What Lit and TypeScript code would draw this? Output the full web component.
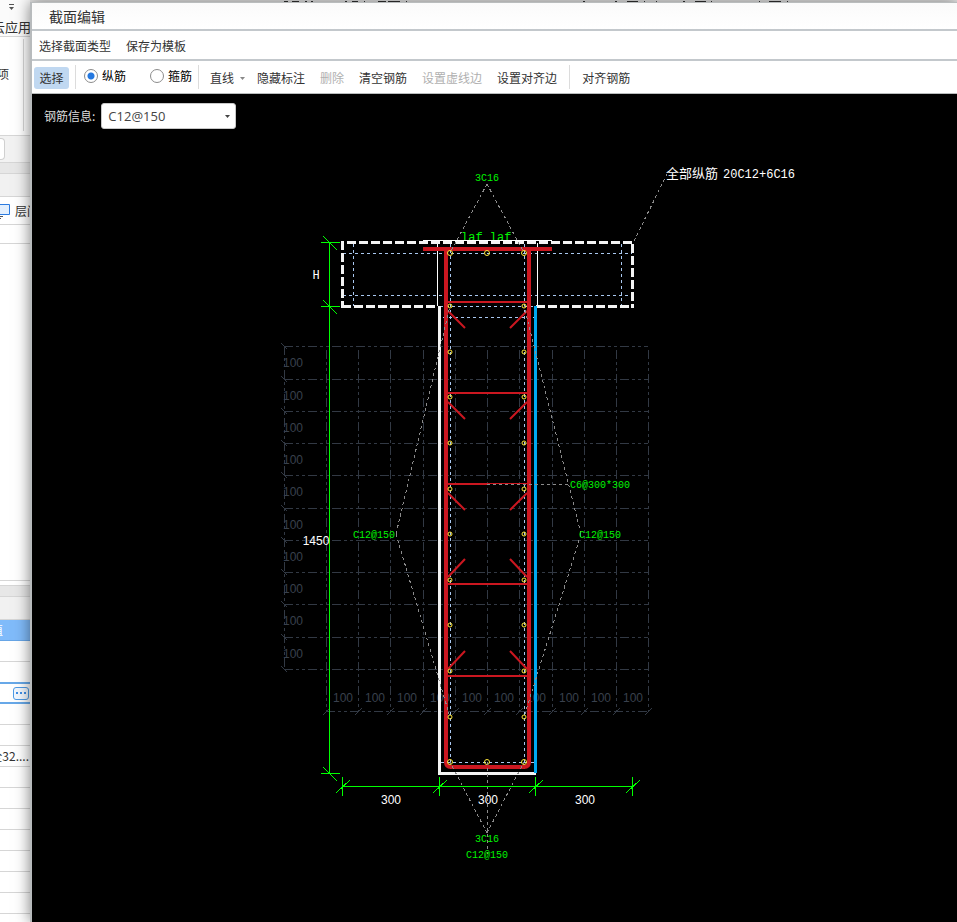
import { LitElement, html, svg, css } from "lit";
import { customElement, state } from "lit/decorators.js";

const range = (n: number) => Array.from({ length: n }, (_, i) => i);

const GRID_X = [326, 358, 390, 423, 455, 487, 519, 552, 584, 616, 648];
const GRID_Y = [346, 379, 411, 443, 475, 508, 540, 572, 604, 637, 669];
const BAR_Y = [306, 352, 397, 443, 489, 534, 580, 625, 671, 717];
const TIES = [
  { y: 302, dir: 1 },
  { y: 393, dir: 1 },
  { y: 484, dir: 1 },
  { y: 584, dir: -1 },
  { y: 676, dir: -1 },
];

/** Cross-section drawing: flange, web, rebar, ties and dimensions. */
@customElement("section-drawing")
class SectionDrawing extends LitElement {
  static styles = css`
    :host { display: grid; }
    svg { display: block; width: 100%; height: 100%; min-height: 780px; }
    path, circle { fill: none; }
    .lines { shape-rendering: crispEdges; }
    .grid { stroke: #323944; stroke-dasharray: 9 3 3 3 3 3; }
    .tick { stroke: #323944; }
    .cover { stroke: #a9c8f0; stroke-dasharray: 3 3; }
    .flange { stroke: #f4f4f4; stroke-width: 3; stroke-dasharray: 9 3; }
    .thin { stroke: #fff; }
    .edge { stroke: #f4f4f4; stroke-width: 3; }
    .aligned { stroke: #00a8f0; stroke-width: 3; }
    .stirrup { stroke: #cb1720; stroke-width: 4; shape-rendering: auto; }
    .tie { stroke: #cb1720; stroke-width: 2; }
    .fine { stroke: #cb1720; }
    .hook { stroke: #cb1720; stroke-width: 2; shape-rendering: auto; }
    .bar { stroke: #ffe83a; }
    .leader { stroke: #8b8b8b; stroke-dasharray: 3 3; }
    .dim { stroke: #00ff00; }
    text { font-family: "Liberation Sans", sans-serif; font-size: 12px; fill: #fff; }
    .mid { text-anchor: middle; }
    .dark { fill: #39414d; }
    .green { fill: #00f400; font-family: "Liberation Mono", monospace; font-size: 10px; }
    .lap { fill: #00f400; font-family: "Liberation Mono", monospace; }
    .mono { font-family: "Liberation Mono", monospace; }
    .total { font-family: "Noto Sans CJK SC", sans-serif; font-size: 13px; }
  `;

  private grid() {
    return svg`
      ${GRID_X.map((x) => svg`<path class="grid" d="M${x + 0.5} 350V711"/>
        <path class="tick" d="M${x - 3} 715l7 -7"/>`)}
      ${GRID_Y.map((y) => svg`<path class="grid" d="M284 ${y + 0.5}H648"/>
        <path class="tick" d="M281 ${y - 3}l6 6"/>`)}
      <path class="grid" d="M284.5 346V669M326 711.5H648"/>`;
  }

  private gridLabels() {
    return svg`
      ${range(10).map((i) => svg`<text class="dark" x="283" y=${GRID_Y[i] + 21}>100</text>
        <text class="dark" x=${GRID_X[i] + 7} y="702">100</text>`)}`;
  }

  private tie(t: { y: number; dir: number }) {
    const a = t.dir > 0 ? t.y + 9 : t.y - 7;
    const b = t.dir > 0 ? t.y + 26 : t.y - 25;
    return svg`<path class="tie" d="M446 ${t.y}H${t.y === 484 ? 487 : 528}"/>
      <path class="hook" d="M448 ${a}L465 ${b}M527 ${a}L510 ${b}"/>`;
  }

  render() {
    return html`<svg role="img" aria-label="截面">
      <g transform="translate(-32 -94)">
        <g class="lines">${this.grid()}</g>
        ${this.gridLabels()}
        <text class="lap" x="461" y="241">laf laf</text>
        <g class="lines">
          <path class="cover" d="M343 253.5H632M343 295.5H632M353.5 244V306M621.5 244V306M440 306.5H536M443 317.5H536M450.5 244V772M524.5 244V772M441 762.5H534"/>
          <path class="thin" d="M437.5 243V306M537.5 243V306M423 240.5H552"/>
          <path class="stirrup" d="M423 249H552M446 250V762Q446 767 451 767H524Q529 767 529 762V250"/>
          ${TIES.map((t) => this.tie(t))}
          <path class="fine" d="M487 483.5H528"/>
          <path class="flange" stroke-dashoffset="7" d="M342 242.5H634"/>
          <path class="flange" d="M342.5 241V308M632.5 244V308M342 306.5H438M536 306.5H633"/>
          <path class="edge" d="M439.5 306V773.5H536"/>
          <path class="aligned" d="M535.5 306V773"/>
        </g>
        ${BAR_Y.map((y) => svg`<circle class="bar" cx="450" cy=${y} r="2"/><circle class="bar" cx="524" cy=${y} r="2"/>`)}
        ${[253, 762].map((y) => [450, 487, 524].map((x) => svg`<circle class="bar" cx=${x} cy=${y} r="2.5"/>`))}
        <g class="lines">
          <path class="leader" d="M487 184L450 253M487 184L524 253M487.5 762V854M487 833L450 762M487 833L524 762"/>
          <path class="leader" d="M396 534L450 306M396 534L450 717M581 534L524 306M581 534L524 717M487 484.5H570M634 241L667 174"/>
          <path class="dim" d="M329.5 242V774M321 242.5H340M321 306.5H340M321 773.5H340M323 236l14 14M323 300l14 14M323 767l14 14"/>
          <path class="dim" d="M342 786.5H633"/>
          ${[342, 439, 535, 632].map((x) => svg`<path class="dim" d="M${x + 0.5} 777V796M${x - 6} 793l14 -13"/>`)}
        </g>
        <text class="total" x="666" y="178">全部纵筋</text>
        <text class="mono" x="723" y="178">20C12+6C16</text>
        <text class="mono mid" x="316" y="279">H</text>
        <text class="mid" x="316" y="545">1450</text>
        ${[391, 488, 585].map((x) => svg`<text class="mid" x=${x} y="804">300</text>`)}
        <text class="green mid" x="487" y="181">3C16</text>
        <text class="green" x="353" y="538">C12@150</text>
        <text class="green" x="579" y="538">C12@150</text>
        <text class="green" x="570" y="488">C6@300*300</text>
        <text class="green mid" x="487" y="842">3C16</text>
        <text class="green mid" x="487" y="858">C12@150</text>
      </g>
    </svg>`;
  }
}

/** Sliver of the main window that stays visible left of the dialog. */
@customElement("main-window-strip")
class MainWindowStrip extends LitElement {
  static styles = css`
    :host { display: flex; flex-direction: column; background: #fff; color: #333; font: 12px/16px "Noto Sans CJK SC", sans-serif; overflow: hidden; white-space: nowrap; }
    div { box-sizing: border-box; flex: none; display: flex; border-bottom: 1px solid #d6d6d6; }
    svg { flex: none; }
    .top { flex-direction: column; justify-content: space-between; height: 37px; padding: 3px 0 1px; background: #fbfbfb; }
    .top svg { margin-left: 7px; }
    .tab { display: flex; justify-content: flex-end; width: 31px; font-size: 13px; }
    .ribbon { height: 99px; padding: 2px 6px 4px 0; justify-content: space-between; align-items: stretch; }
    .ribbon span { width: 9px; display: flex; justify-content: flex-end; align-self: center; padding-bottom: 22px; }
    .ribbon i { border-left: 1px solid #d6d6d6; }
    .search { height: 27px; padding: 2px 0; background: #f2f2f2; }
    .search i { width: 4px; border: 1px solid #d0d0d0; border-left: 0; border-radius: 0 4px 4px 0; background: #fff; }
    .gap { height: 11px; background: #e7e7e7; }
    .head { height: 23px; background: #f1f1f1; }
    .layer { height: 28px; align-items: center; gap: 4px; }
    .plain { height: 19px; }
    .tree { height: 337px; }
    .thin { height: 5px; }
    .row { height: 21px; align-items: center; }
    .last { height: 20px; border-bottom: 0; }
    .selected { height: 21px; align-items: center; background: #80bbfa; color: #fff; border-bottom-color: #67a5e6; }
    .cut { width: 3px; display: flex; justify-content: flex-end; }
    .active { height: 22px; justify-content: flex-end; align-items: center; padding-right: 1px; border-top: 2px solid #67a8e8; border-bottom: 2px solid #67a8e8; }
    .value { width: 29px; display: flex; justify-content: flex-end; }
    button { width: 16px; height: 13px; padding: 0; border: 1px solid #4f9be5; border-radius: 3px; background: #f2f8ff; display: grid; place-items: center; }
  `;

  render() {
    return html`
      <div class="top">
        <svg width="9" height="8"><path d="M2 1.500h5" stroke="#555"/><path d="M2 4h5L4.500 7z" fill="#555"/></svg>
        <span class="tab">云应用</span>
      </div>
      <div class="ribbon"><span>项</span><i></i></div>
      <div class="search"><i></i></div>
      <div class="gap"></div>
      <div class="head"></div>
      <div class="layer">
        <svg width="11" height="16"><path d="M-2 1.500H9.500V11.500H-2z" fill="#e3effd" stroke="#2c7be0"/><path d="M-1 13.500H3M-1 15.500H1" stroke="#555"/></svg>
        <span>层间</span>
      </div>
      <div class="plain"></div>
      <div class="tree"></div>
      <div class="thin"></div>
      <div class="gap"></div>
      <div class="head"></div>
      <div class="selected"><span class="cut">值</span></div>
      <div class="row"></div>
      <div class="last"></div>
      <div class="active">
        <button aria-label="更多"><svg width="10" height="2"><path d="M0 0h2v2H0zM4 0h2v2H4zM8 0h2v2H8z" fill="#3f8ee6"/></svg></button>
      </div>
      <div class="row"></div>
      <div class="row"></div>
      <div class="row"><span class="value">全32....</span></div>
      ${range(8).map(() => html`<div class="row"></div>`)}
    `;
  }
}

@customElement("app-root")
class AppRoot extends LitElement {
  @state() private barType = "纵筋";

  static styles = css`
    :host { display: grid; grid-template-columns: 30px minmax(0, 1fr); height: 100vh; overflow: hidden; background: #e9e9e9; font: 12px/16px "Noto Sans CJK SC", sans-serif; color: #333; }
    main-window-strip { min-height: 0; }
    .side { display: flex; flex-direction: column; min-width: 0; min-height: 0; }
    .behind { flex: none; height: 2px; display: block; width: 100%; }
    .dialog { flex: 1; min-height: 0; display: flex; flex-direction: column; border-left: 2px solid #b8bbbd; border-top: 1px solid #b9bcbd; background: #fff; box-shadow: 0 0 14px rgba(0, 0, 0, 0.5); }
    .title { flex: none; box-sizing: border-box; height: 28px; margin: 0; padding: 3px 17px 0; border-bottom: 2px solid #c3c8cc; background: linear-gradient(#fafafa, #fff); font-size: 14px; line-height: 20px; font-weight: 400; }
    .menu { flex: none; box-sizing: border-box; height: 30px; display: flex; align-items: center; gap: 15px; padding: 2px 0 0 7px; border-bottom: 2px solid #c3c8cc; }
    .tools { flex: none; box-sizing: border-box; height: 33px; display: flex; align-items: center; padding: 2px 0 0 2px; border-bottom: 1px solid #b9bcbd; }
    button { font: inherit; color: #333; padding: 0; border: 0; background: none; white-space: nowrap; }
    button:disabled { color: #b0b0b0; }
    .picked { width: 35px; height: 22px; border-radius: 3px; background: #c0d8f1; }
    .tools hr { flex: none; width: 1px; height: 24px; border: 0; background: #dcdcdc; }
    .tools .after-pick { margin: 0 8px 2px 6px; }
    .tools .after-radio { margin: 0 11px 2px 6px; }
    .tools .before-last { margin: 0 12px 2px; }
    .commands { display: flex; gap: 15px; }
    .drop { display: flex; align-items: center; gap: 6px; margin-right: -3px; }
    .radios { display: flex; gap: 24px; padding-bottom: 4px; color: #000; }
    .radios label { display: flex; align-items: center; gap: 4px; white-space: nowrap; }
    input { appearance: none; width: 14px; height: 14px; margin: 0; border: 1px solid #8c8c8c; border-radius: 50%; background: #fff; }
    input:checked { background: radial-gradient(#2478e0 0 3px, #fff 4px); }
    .canvas { flex: 1; min-height: 0; display: grid; background: #000; }
    section-drawing { grid-area: 1 / 1; min-height: 0; }
    .info { grid-area: 1 / 1; align-self: start; justify-self: start; display: flex; align-items: center; gap: 6px; padding: 9px 12px; color: #ddd; }
    .combo { display: grid; align-items: center; }
    .combo svg { grid-area: 1 / 1; justify-self: end; margin-right: 6px; pointer-events: none; }
    select { grid-area: 1 / 1; appearance: none; width: 135px; height: 26px; padding: 0 6px; border: 1px solid #c8c8c8; border-radius: 3px; background: #fff; color: #444; font: 13px "Open Sans", sans-serif; }
  `;

  private radio(name: string) {
    return html`<label><input type="radio" name="bar" .checked=${this.barType === name}
      @change=${() => (this.barType = name)} />${name}</label>`;
  }

  render() {
    return html`
      <main-window-strip></main-window-strip>
      <div class="side">
        <svg class="behind" aria-hidden="true">
          <path d="M254 1.500h4M262 1.500h7M275 1.500h2M281 1.500h2M315 1.500h2M322 1.500h6M334 1.500h1M348 1.500h8M358 1.500h12M376 1.500h1M553 1.500h2M585 1.500h2M597 1.500h11M614 1.500h1M626 1.500h1M653 1.500h2M665 1.500h11M681 1.500h1M729 1.500h1M739 1.500h12M757 1.500h1" stroke="#333" />
        </svg>
        <div class="dialog" role="dialog" aria-label="截面编辑">
          <h1 class="title">截面编辑</h1>
          <nav class="menu"><button>选择截面类型</button><button>保存为模板</button></nav>
          <div class="tools" role="toolbar">
            <button class="picked">选择</button>
            <hr class="after-pick" />
            <div class="radios">${this.radio("纵筋")}${this.radio("箍筋")}</div>
            <hr class="after-radio" />
            <div class="commands">
              <button class="drop">直线<svg width="5" height="3"><path d="M0 0h5L2.500 3z" fill="#888" /></svg></button>
              <button>隐藏标注</button>
              <button disabled>删除</button>
              <button>清空钢筋</button>
              <button disabled>设置虚线边</button>
              <button>设置对齐边</button>
            </div>
            <hr class="before-last" />
            <button>对齐钢筋</button>
          </div>
          <div class="canvas">
            <section-drawing></section-drawing>
            <div class="info">
              <label for="bar-info">钢筋信息:</label>
              <span class="combo">
                <select id="bar-info"><option>C12@150</option></select>
                <svg width="5" height="3"><path d="M0 0h5L2.500 3z" fill="#444" /></svg>
              </span>
            </div>
          </div>
        </div>
      </div>
    `;
  }
}
